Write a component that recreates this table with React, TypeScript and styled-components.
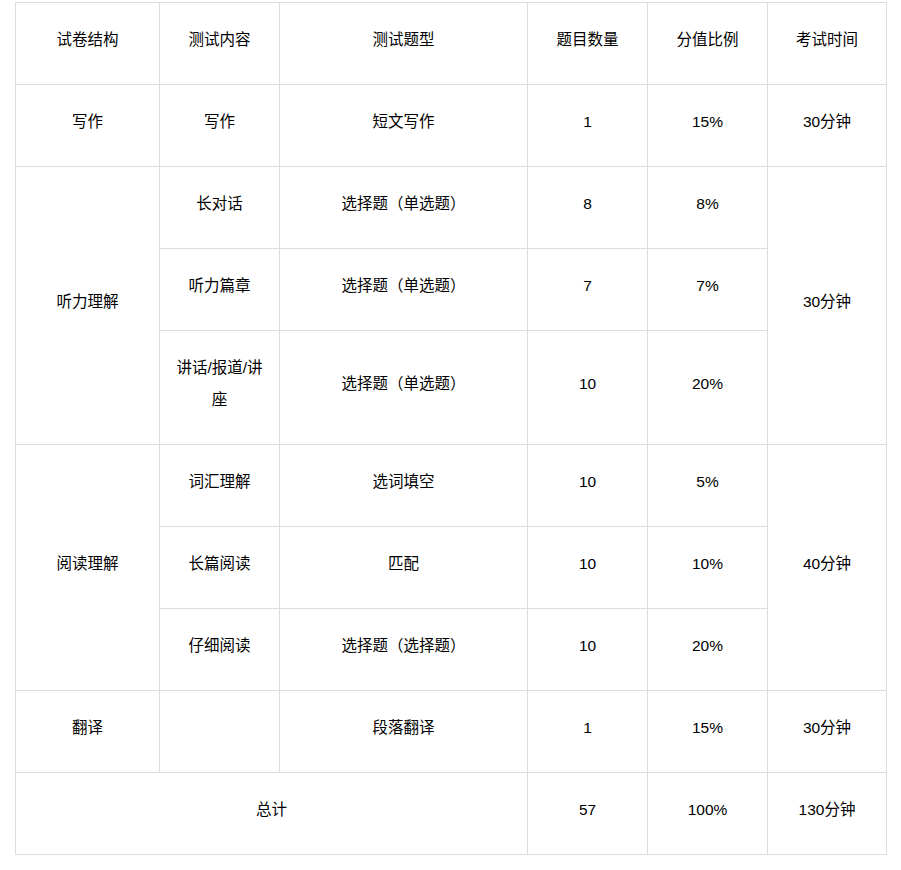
import styled, { createGlobalStyle } from "styled-components";

const GlobalStyle = createGlobalStyle`
  body {
    margin: 0;
    background: #fff;
    font-family: "Liberation Sans", Arial, "Noto Sans CJK SC", sans-serif;
  }
`;

const Wrapper = styled.div`
  padding: 2px 15px 0 15px;
`;

const Table = styled.table`
  width: 871px;
  border-collapse: collapse;
  table-layout: fixed;
  font-size: 15.5px;
  color: #000;
`;

const Cell = styled.td`
  border: 1px solid #dddddd;
  padding: 21px 14px 28px 14px;
  line-height: 32px;
  text-align: center;
  vertical-align: middle;
  word-break: break-all;
`;

const HeadCell = styled(Cell).attrs({ as: "th" })`
  font-weight: normal;
`;

const columns = [144, 120, 248, 120, 120, 119];

const headers = ["试卷结构", "测试内容", "测试题型", "题目数量", "分值比例", "考试时间"];

function App() {
  return (
    <Wrapper>
      <GlobalStyle />
      <Table>
        <colgroup>
          {columns.map((w, i) => (
            <col key={i} style={{ width: w }} />
          ))}
        </colgroup>
        <thead>
          <tr>
            {headers.map((h) => (
              <HeadCell key={h}>{h}</HeadCell>
            ))}
          </tr>
        </thead>
        <tbody>
          <tr>
            <Cell>写作</Cell>
            <Cell>写作</Cell>
            <Cell>短文写作</Cell>
            <Cell>1</Cell>
            <Cell>15%</Cell>
            <Cell>30分钟</Cell>
          </tr>
          <tr>
            <Cell rowSpan={3}>听力理解</Cell>
            <Cell>长对话</Cell>
            <Cell>选择题（单选题）</Cell>
            <Cell>8</Cell>
            <Cell>8%</Cell>
            <Cell rowSpan={3}>30分钟</Cell>
          </tr>
          <tr>
            <Cell>听力篇章</Cell>
            <Cell>选择题（单选题）</Cell>
            <Cell>7</Cell>
            <Cell>7%</Cell>
          </tr>
          <tr>
            <Cell>讲话/报道/讲座</Cell>
            <Cell>选择题（单选题）</Cell>
            <Cell>10</Cell>
            <Cell>20%</Cell>
          </tr>
          <tr>
            <Cell rowSpan={3}>阅读理解</Cell>
            <Cell>词汇理解</Cell>
            <Cell>选词填空</Cell>
            <Cell>10</Cell>
            <Cell>5%</Cell>
            <Cell rowSpan={3}>40分钟</Cell>
          </tr>
          <tr>
            <Cell>长篇阅读</Cell>
            <Cell>匹配</Cell>
            <Cell>10</Cell>
            <Cell>10%</Cell>
          </tr>
          <tr>
            <Cell>仔细阅读</Cell>
            <Cell>选择题（选择题）</Cell>
            <Cell>10</Cell>
            <Cell>20%</Cell>
          </tr>
          <tr>
            <Cell>翻译</Cell>
            <Cell></Cell>
            <Cell>段落翻译</Cell>
            <Cell>1</Cell>
            <Cell>15%</Cell>
            <Cell>30分钟</Cell>
          </tr>
          <tr>
            <Cell colSpan={3}>总计</Cell>
            <Cell>57</Cell>
            <Cell>100%</Cell>
            <Cell>130分钟</Cell>
          </tr>
        </tbody>
      </Table>
    </Wrapper>
  );
}

export default App;
